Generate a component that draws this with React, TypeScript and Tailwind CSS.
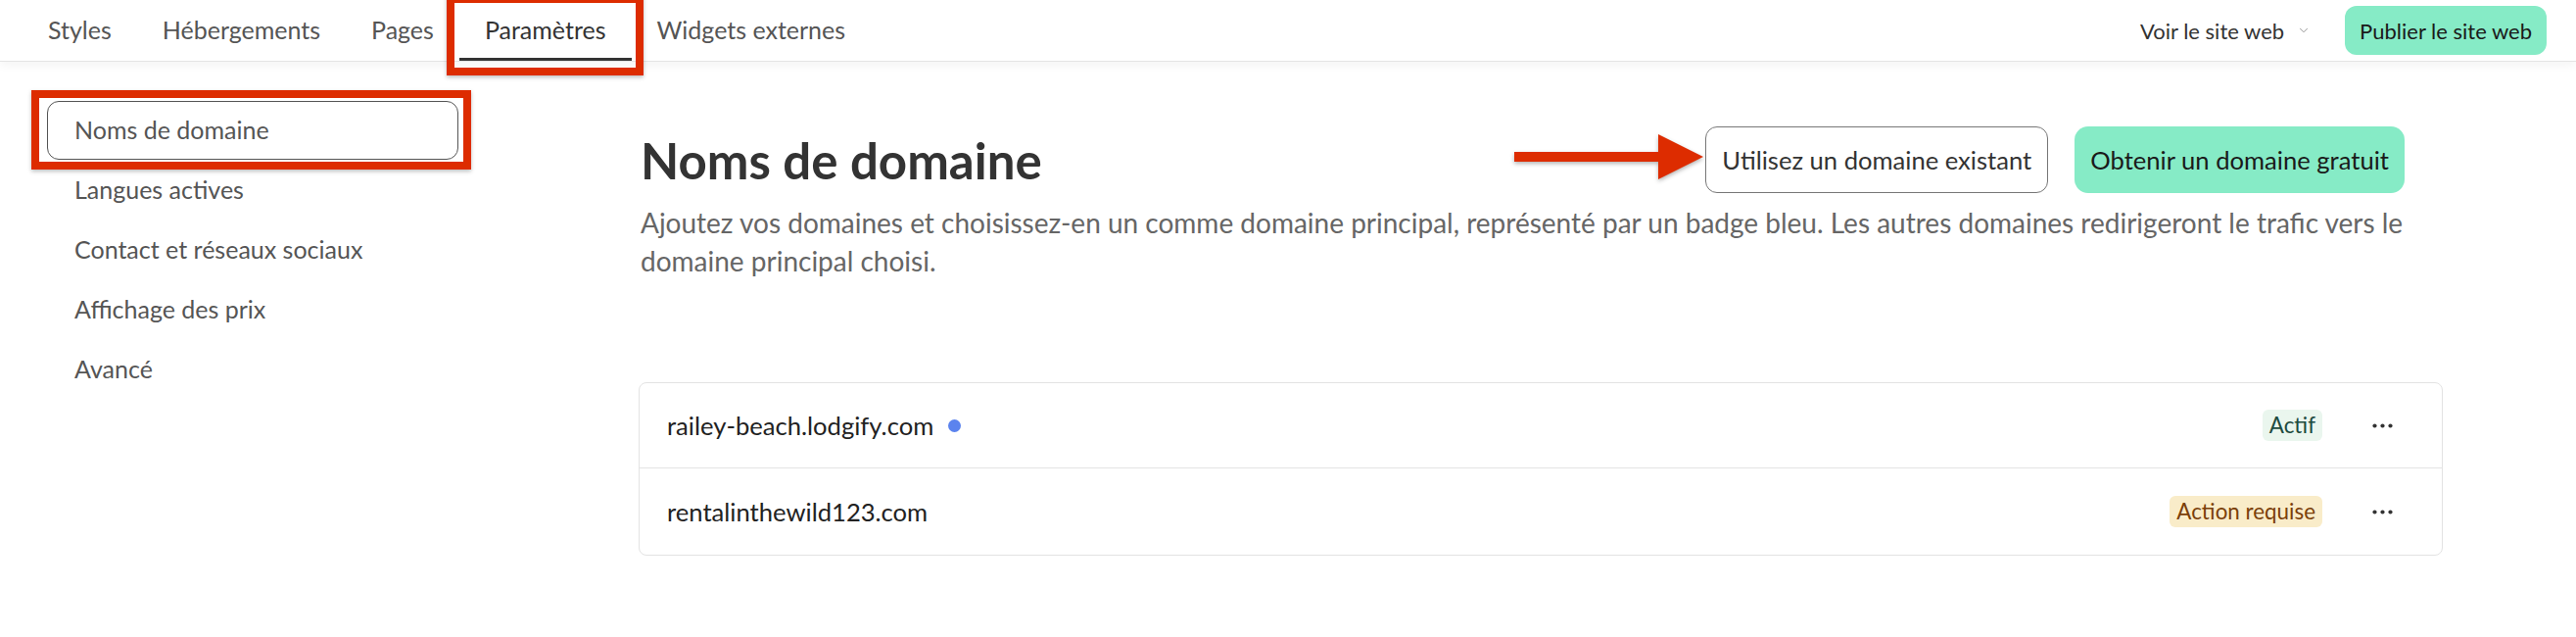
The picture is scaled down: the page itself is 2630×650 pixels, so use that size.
import { ChevronDown } from "lucide-react";

const tabs = ["Styles", "Hébergements", "Pages", "Paramètres", "Widgets externes"];
const menu = ["Noms de domaine", "Langues actives", "Contact et réseaux sociaux", "Affichage des prix", "Avancé"];

const Dots = () => (
  <svg width="21" height="5" viewBox="0 0 21 5" className="text-[#333]">
    <circle cx="2.5" cy="2.5" r="2.1" fill="currentColor" />
    <circle cx="10.5" cy="2.5" r="2.1" fill="currentColor" />
    <circle cx="18.5" cy="2.5" r="2.1" fill="currentColor" />
  </svg>
);

const App = () => {
  return (
    <div className="relative w-[2630px] h-[650px] bg-white overflow-hidden font-['Lato',sans-serif]">
      {/* top bar */}
      <header className="relative z-10 h-[63px] flex items-center justify-between pl-[23px] pr-[30px] bg-white border-b border-[#e4e4e4] shadow-[0_3px_10px_rgba(0,0,0,0.05)]">
        <nav className="flex h-full">
          {tabs.map((t) => (
            <div
              key={t}
              className={
                t === "Paramètres"
                  ? "h-full flex items-center px-[26px] pt-[3px] border-b-[3px] border-[#333] text-[25px] text-[#333]"
                  : "h-full flex items-center px-[26px] text-[25px] text-[#555]"
              }
            >
              {t}
            </div>
          ))}
        </nav>
        <div className="flex items-center">
          <span className="text-[22px] text-[#333]">Voir le site web</span>
          <ChevronDown className="w-[14px] h-[14px] text-[#888] ml-[13px]" strokeWidth={1.5} />
          <button className="ml-[35px] h-[50px] px-[15px] rounded-[12px] bg-[#86ebc6] text-[22px] text-[#1a1a1a]">
            Publier le site web
          </button>
        </div>
      </header>

      <div className="flex">
        {/* sidebar */}
        <aside className="w-[652px] shrink-0 pl-[48px] pt-[40px]">
          <ul className="flex flex-col gap-px w-[420px]">
            {menu.map((m, i) => (
              <li
                key={m}
                className={
                  i === 0
                    ? "h-[60px] flex items-center pl-[27px] rounded-[12px] border border-[#555] text-[25px] text-[#555]"
                    : "h-[60px] flex items-center pl-[28px] text-[25px] text-[#555]"
                }
              >
                {m}
              </li>
            ))}
          </ul>
        </aside>

        {/* content */}
        <main className="w-[1842px] shrink-0 pt-[66px]">
          <div className="h-[68px] flex items-center justify-between pr-[39px]">
            <h1 className="ml-[2px] text-[51px] font-bold text-[#333] leading-none">Noms de domaine</h1>
            <div className="flex items-center gap-[27px]">
              <button className="h-[68px] px-[16px] rounded-[12px] border border-[#777] bg-white text-[25.6px] text-[#333]">
                Utilisez un domaine existant
              </button>
              <button className="h-[68px] px-[16px] rounded-[14px] bg-[#86ebc6] text-[25.6px] text-[#1a1a1a]">
                Obtenir un domaine gratuit
              </button>
            </div>
          </div>
          <p className="mt-[11px] ml-[2px] text-[28px] leading-[39px] text-[#666]">
            Ajoutez vos domaines et choisissez-en un comme domaine principal, représenté par un badge bleu. Les autres domaines redirigeront le trafic vers le domaine principal choisi.
          </p>

          <div className="mt-[104px] rounded-[8px] border border-[#e3e3e3]">
            <div className="h-[87px] flex items-center pl-[28px] pr-[50px] border-b border-[#e3e3e3]">
              <span className="text-[25.6px] text-[#222]">railey-beach.lodgify.com</span>
              <span className="ml-[15px] w-[13px] h-[13px] rounded-full bg-[#5b83ee]" />
              <span className="ml-auto h-[32px] px-[7px] flex items-center rounded-[6px] bg-[#eaf6ee] text-[22.4px] text-[#1e4b3f]">
                Actif
              </span>
              <span className="ml-[51px] flex items-center">
                <Dots />
              </span>
            </div>
            <div className="h-[88px] flex items-center pl-[28px] pr-[50px]">
              <span className="text-[25.6px] text-[#222]">rentalinthewild123.com</span>
              <span className="ml-auto h-[32px] px-[7px] flex items-center rounded-[6px] bg-[#f9ecc9] text-[22.4px] text-[#7b3f0a]">
                Action requise
              </span>
              <span className="ml-[51px] flex items-center">
                <Dots />
              </span>
            </div>
          </div>
        </main>
      </div>

      {/* annotations */}
      <div className="absolute z-20 left-[456px] top-[-5px] w-[201px] h-[82px] border-[8px] border-[#dd2c00] shadow-[0_2px_4px_rgba(0,0,0,0.25)]" />
      <div className="absolute z-20 left-[32px] top-[92px] w-[449px] h-[81px] border-[8px] border-[#dd2c00] shadow-[0_2px_4px_rgba(0,0,0,0.25)]" />
      <svg
        className="absolute z-20 left-[1546px] top-[137px] drop-shadow-[0_2px_2px_rgba(0,0,0,0.3)]"
        width="193"
        height="46"
        viewBox="0 0 193 46"
      >
        <rect x="0" y="18" width="150" height="10" fill="#dd2c00" />
        <polygon points="147,0 193,23 147,46" fill="#dd2c00" />
      </svg>
    </div>
  );
};

export default App;
